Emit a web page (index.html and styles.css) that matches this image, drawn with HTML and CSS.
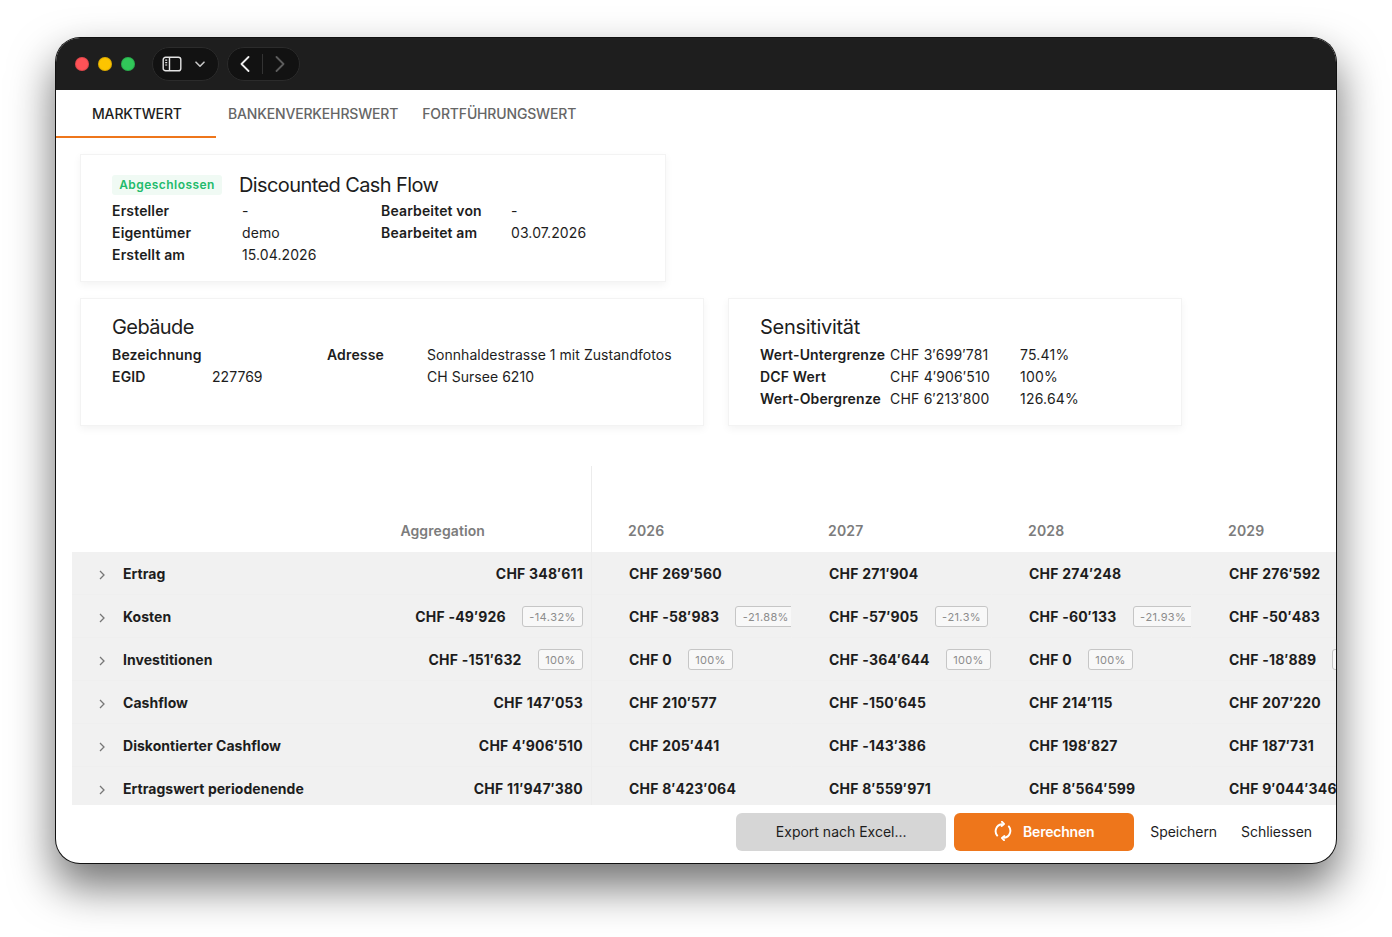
FILE: index.html
```html
<!DOCTYPE html>
<html lang="de">
<head>
    <meta charset="UTF-8">
    <title>Discounted Cash Flow</title>
    <link rel="stylesheet" href="styles.css">
</head>
<body>
    <div class="window">
        <div class="titlebar">
            <span class="dot dot-red"></span>
            <span class="dot dot-yellow"></span>
            <span class="dot dot-green"></span>
            <div class="pill pill-sidebar">
                <svg width="20" height="16" viewBox="0 0 20 16" fill="none" stroke="#e4e4e4" stroke-width="1.4">
                    <rect x="1.2" y="1.2" width="17.6" height="13.6" rx="2.4"/>
                    <path d="M7.5 1.2v13.6"/>
                    <path d="M3.2 4.2h2M3.2 6.6h2M3.2 9h2" stroke-width="1.2"/>
                </svg>
                <svg class="pill-chevron" width="10" height="7" viewBox="0 0 10 7" fill="none" stroke="#c4c4c4" stroke-width="1.6" stroke-linecap="round" stroke-linejoin="round">
                    <path d="M1 1.2l4 4 4-4"/>
                </svg>
            </div>
            <div class="pill pill-nav">
                <svg width="10" height="16" viewBox="0 0 10 16" fill="none" stroke="#efefef" stroke-width="1.8" stroke-linecap="round" stroke-linejoin="round">
                    <path d="M8.5 1L1.5 8l7 7"/>
                </svg>
                <span class="pill-divider"></span>
                <svg width="10" height="16" viewBox="0 0 10 16" fill="none" stroke="#5c5c5c" stroke-width="1.8" stroke-linecap="round" stroke-linejoin="round">
                    <path d="M1.5 1l7 7-7 7"/>
                </svg>
            </div>
        </div>

        <div class="tabs">
            <div class="tab tab-active">MARKTWERT</div>
            <div class="tab">BANKENVERKEHRSWERT</div>
            <div class="tab">FORTFÜHRUNGSWERT</div>
        </div>

        <div class="cards">
            <div class="card card-dcf">
                <div class="card-head">
                    <span class="badge-done">Abgeschlossen</span>
                    <h2>Discounted Cash Flow</h2>
                </div>
                <div class="info info-dcf">
                    <b>Ersteller</b><span>-</span><b>Bearbeitet von</b><span>-</span>
                    <b>Eigentümer</b><span>demo</span><b>Bearbeitet am</b><span>03.07.2026</span>
                    <b>Erstellt am</b><span>15.04.2026</span>
                </div>
            </div>
            <div class="card-row">
                <div class="card card-building">
                    <h2>Gebäude</h2>
                    <div class="info info-building">
                        <b>Bezeichnung</b><span></span><b>Adresse</b><span>Sonnhaldestrasse 1 mit Zustandfotos</span>
                        <b>EGID</b><span>227769</span><span></span><span>CH Sursee 6210</span>
                    </div>
                </div>
                <div class="card card-sens">
                    <h2>Sensitivität</h2>
                    <div class="info info-sens">
                        <b>Wert-Untergrenze</b><span>CHF 3′699′781</span><span>75.41%</span>
                        <b>DCF Wert</b><span>CHF 4′906′510</span><span>100%</span>
                        <b>Wert-Obergrenze</b><span>CHF 6′213′800</span><span>126.64%</span>
                    </div>
                </div>
            </div>
        </div>

        <div class="table">
            <div class="thead">
                <div class="th-agg">Aggregation</div>
                <div class="th-year">2026</div>
                <div class="th-year">2027</div>
                <div class="th-year">2028</div>
                <div class="th-year">2029</div>
            </div>

            <div class="row">
                <div class="cell-name"><svg class="chev" width="6" height="10" viewBox="0 0 6 10"><path d="M1 1l4 4-4 4"/></svg>Ertrag</div>
                <div class="cell-agg">CHF 348′611</div>
                <div class="cell">CHF 269′560</div>
                <div class="cell">CHF 271′904</div>
                <div class="cell">CHF 274′248</div>
                <div class="cell">CHF 276′592</div>
            </div>
            <div class="row">
                <div class="cell-name"><svg class="chev" width="6" height="10" viewBox="0 0 6 10"><path d="M1 1l4 4-4 4"/></svg>Kosten</div>
                <div class="cell-agg">CHF -49′926<span class="pct">-14.32%</span></div>
                <div class="cell">CHF -58′983<span class="pct">-21.88%</span></div>
                <div class="cell">CHF -57′905<span class="pct">-21.3%</span></div>
                <div class="cell">CHF -60′133<span class="pct">-21.93%</span></div>
                <div class="cell">CHF -50′483<span class="pct pct-cut"></span></div>
            </div>
            <div class="row">
                <div class="cell-name"><svg class="chev" width="6" height="10" viewBox="0 0 6 10"><path d="M1 1l4 4-4 4"/></svg>Investitionen</div>
                <div class="cell-agg">CHF -151′632<span class="pct">100%</span></div>
                <div class="cell">CHF 0<span class="pct">100%</span></div>
                <div class="cell">CHF -364′644<span class="pct">100%</span></div>
                <div class="cell">CHF 0<span class="pct">100%</span></div>
                <div class="cell">CHF -18′889<span class="pct pct-cut"></span></div>
            </div>
            <div class="row">
                <div class="cell-name"><svg class="chev" width="6" height="10" viewBox="0 0 6 10"><path d="M1 1l4 4-4 4"/></svg>Cashflow</div>
                <div class="cell-agg">CHF 147′053</div>
                <div class="cell">CHF 210′577</div>
                <div class="cell">CHF -150′645</div>
                <div class="cell">CHF 214′115</div>
                <div class="cell">CHF 207′220</div>
            </div>
            <div class="row">
                <div class="cell-name"><svg class="chev" width="6" height="10" viewBox="0 0 6 10"><path d="M1 1l4 4-4 4"/></svg>Diskontierter Cashflow</div>
                <div class="cell-agg">CHF 4′906′510</div>
                <div class="cell">CHF 205′441</div>
                <div class="cell">CHF -143′386</div>
                <div class="cell">CHF 198′827</div>
                <div class="cell">CHF 187′731</div>
            </div>
            <div class="row">
                <div class="cell-name"><svg class="chev" width="6" height="10" viewBox="0 0 6 10"><path d="M1 1l4 4-4 4"/></svg>Ertragswert periodenende</div>
                <div class="cell-agg">CHF 11′947′380</div>
                <div class="cell">CHF 8′423′064</div>
                <div class="cell">CHF 8′559′971</div>
                <div class="cell">CHF 8′564′599</div>
                <div class="cell">CHF 9′044′346</div>
            </div>
        </div>

        <div class="footer">
            <button class="btn btn-export">Export nach Excel...</button>
            <button class="btn btn-calc">
                <svg width="18" height="20" viewBox="0 0 18 20" fill="none" stroke="#fff" stroke-width="1.9" stroke-linecap="round" stroke-linejoin="round">
                    <path d="M3.2 14.6A7 7 0 0 1 7.6 3.3"/>
                    <path d="M14.8 5.4a7 7 0 0 1-4.4 11.3"/>
                    <path d="M8 0.8L10 3 7.6 5"/>
                    <path d="M10 19.2L8 17l2.4-2"/>
                </svg>
                Berechnen
            </button>
            <button class="btn btn-text">Speichern</button>
            <button class="btn btn-text">Schliessen</button>
        </div>
    </div>
</body>
</html>
```

FILE: styles.css
```css
html, body {
    margin: 0;
    height: 100%;
    background-color: #fff;
}

body {
    font-family: "Inter", "Liberation Sans", sans-serif;
    font-size: 14px;
    color: #1d1d1d;
    padding: 38px 56px 74px;
    box-sizing: border-box;
    overflow: hidden;
}

.window {
    height: 825px;
    display: flex;
    flex-direction: column;
    background-color: #fff;
    border-radius: 24px;
    overflow: hidden;
    box-shadow: 0 0 0 1px #111, 0 22px 44px 2px rgba(0, 0, 0, 0.55);
}

/* title bar */
.titlebar {
    height: 52px;
    flex: none;
    display: flex;
    align-items: center;
    padding-left: 19px;
    box-sizing: border-box;
    background-color: #1e1e1e;
}

.dot {
    width: 14px;
    height: 14px;
    border-radius: 50%;
    margin-right: 9px;
    box-shadow: inset 0 0 0 1px rgba(0, 0, 0, 0.12);
}

.dot-red { background-color: #ff5257; }
.dot-yellow { background-color: #fdc400; }
.dot-green { background-color: #31c859; }

.pill {
    height: 34px;
    box-sizing: border-box;
    display: flex;
    align-items: center;
    background-color: #121212;
    border: 1px solid #2b2b2b;
    border-radius: 17px;
}

.pill-sidebar {
    width: 67px;
    margin-left: 8px;
    padding-left: 9px;
}

.pill-chevron {
    margin-left: 13px;
}

.pill-nav {
    width: 73px;
    margin-left: 8px;
    padding-left: 12px;
}

.pill-divider {
    width: 1px;
    height: 20px;
    background-color: #333;
    margin: 0 12px;
}

/* tabs */
.tabs {
    height: 48px;
    flex: none;
    display: flex;
}

.tab {
    padding: 0 12px;
    line-height: 48px;
    font-weight: 500;
    letter-spacing: -0.16px;
    color: #666;
}

.tab-active {
    width: 160px;
    box-sizing: border-box;
    padding-left: 36px;
    color: #1d1d1d;
    border-bottom: 2px solid #ee761b;
}

/* cards */
.cards {
    flex: none;
    padding: 16px 0 0 24px;
}

.card-row {
    display: flex;
    gap: 24px;
    margin-top: 16px;
}

.card {
    height: 128px;
    box-sizing: border-box;
    padding: 16px 31px 0;
    background-color: #fff;
    border: 1px solid #f3f3f3;
    box-shadow: 0 3px 8px rgba(0, 0, 0, 0.05);
}

.card-dcf {
    width: 586px;
    padding-top: 18px;
}

.card-building {
    width: 624px;
}

.card-sens {
    width: 454px;
}

.card h2 {
    margin: 0;
    font-size: 20px;
    font-weight: 400;
    line-height: 24px;
    letter-spacing: -0.6px;
}

.card-sens h2 {
    letter-spacing: -0.3px;
}

.card-head {
    display: flex;
    align-items: center;
    gap: 17px;
}

.badge-done {
    width: 110px;
    height: 20px;
    box-sizing: border-box;
    text-align: center;
    line-height: 20px;
    font-size: 12px;
    font-weight: 600;
    letter-spacing: 0.45px;
    color: #22bb6c;
    background-color: #f0faf4;
    border-radius: 3px;
}

.info {
    display: grid;
    grid-auto-rows: 22px;
    line-height: 22px;
    margin-top: 5px;
    white-space: nowrap;
    letter-spacing: 0.1px;
}

.info b {
    font-weight: 600;
    letter-spacing: 0.15px;
}

.info-dcf {
    grid-template-columns: 130px 139px 130px auto;
    margin-top: 3px;
}

.info-building {
    grid-template-columns: 100px 115px 100px auto;
    letter-spacing: 0.04px;
}

.info-sens {
    grid-template-columns: 130px 130px auto;
    letter-spacing: 0.2px;
}

/* table */
.table {
    flex: 1;
    min-height: 0;
    margin: 40px 0 0 16px;
    overflow: hidden;
}

.thead {
    height: 86px;
    display: flex;
    font-weight: 600;
    color: #7c7c7c;
}

.th-agg {
    width: 520px;
    flex: none;
    box-sizing: border-box;
    padding: 56px 106px 0 0;
    text-align: right;
    letter-spacing: 0.1px;
    border-right: 1px solid #ececec;
}

.th-year {
    width: 200px;
    flex: none;
    box-sizing: border-box;
    padding: 56px 0 0 36px;
    letter-spacing: 0.2px;
}

.row {
    height: 43px;
    display: flex;
    align-items: stretch;
    background-color: #f1f1f1;
    font-weight: 700;
    white-space: nowrap;
    box-shadow: inset 0 -1px 0 #efefef;
}

.cell-name {
    width: 307px;
    flex: none;
    display: flex;
    align-items: center;
    letter-spacing: 0.04px;
}

.chev {
    margin: 2px 18px 0 27px;
    fill: none;
    stroke: #777;
    stroke-width: 1.3;
}

.cell-agg {
    width: 213px;
    flex: none;
    box-sizing: border-box;
    display: flex;
    align-items: center;
    justify-content: flex-end;
    padding-right: 8px;
    font-kerning: none;
    letter-spacing: 0.2px;
    border-right: 1px solid #ededed;
}

.cell {
    width: 200px;
    flex: none;
    box-sizing: border-box;
    display: flex;
    align-items: center;
    padding-left: 37px;
    font-kerning: none;
    letter-spacing: 0.2px;
    border-right: 1px solid #f1f1f1;
    overflow: hidden;
}

.pct {
    height: 21px;
    box-sizing: border-box;
    flex: none;
    margin-left: 16px;
    padding: 0 6.5px;
    line-height: 20px;
    font-size: 11px;
    font-weight: 400;
    letter-spacing: 0.3px;
    color: #8c8c8c;
    background-color: #f8f8f8;
    border: 1px solid #c6c6c6;
    border-radius: 3px;
}

.pct-cut {
    width: 60px;
}

/* footer */
.footer {
    height: 58px;
    flex: none;
    box-sizing: border-box;
    display: flex;
    align-items: flex-start;
    justify-content: flex-end;
    gap: 8px;
    padding: 8px 16px 0 0;
}

.btn {
    height: 38px;
    padding: 0 8px 2px;
    border: none;
    border-radius: 6px;
    font-family: inherit;
    font-size: 14px;
    color: #1d1d1d;
    background: none;
}

.btn-text {
    letter-spacing: -0.05px;
}

.btn-export {
    width: 210px;
    background-color: #d6d6d6;
}

.btn-calc {
    width: 180px;
    display: flex;
    align-items: center;
    justify-content: center;
    gap: 11px;
    font-weight: 600;
    letter-spacing: -0.2px;
    color: #fff;
    background-color: #ee761b;
}
```
